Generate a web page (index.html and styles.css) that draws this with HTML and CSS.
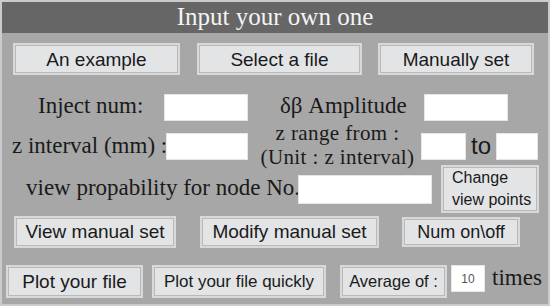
FILE: index.html
```html
<!DOCTYPE html>
<html>
<head>
<meta charset="utf-8">
<link rel="stylesheet" href="styles.css">
</head>
<body>
<div class="panel">
  <div class="title">Input your own one</div>

  <div class="row r1">
    <button class="btn b-example">An example</button>
    <button class="btn b-select">Select a file</button>
    <button class="btn b-manual">Manually set</button>
  </div>

  <div class="row r2">
    <span class="lbl l-inject">Inject num:</span>
    <input class="inp i-inject" type="text">
    <span class="lbl l-amp">δβ Amplitude</span>
    <input class="inp i-amp" type="text">
  </div>

  <div class="row r3">
    <span class="lbl l-zint">z interval (mm) :</span>
    <input class="inp i-zint" type="text">
    <span class="lbl l-range">z range from :<br>(Unit : z interval)</span>
    <input class="inp i-from" type="text">
    <span class="to">to</span>
    <input class="inp i-to" type="text">
  </div>

  <div class="row r4">
    <span class="lbl l-view">view propability for node No.</span>
    <input class="inp i-node" type="text">
    <button class="btn b-change">Change<br>view points</button>
  </div>

  <div class="row r5">
    <button class="btn b-viewset">View manual set</button>
    <button class="btn b-modify">Modify manual set</button>
    <button class="btn b-num">Num on\off</button>
  </div>

  <div class="row r6">
    <button class="btn b-plot">Plot your file</button>
    <button class="btn b-quick">Plot your file quickly</button>
    <button class="btn b-avg">Average of :</button>
    <input class="inp i-avg" type="text" value="10">
    <span class="lbl l-times">times</span>
  </div>
</div>
</body>
</html>
```

FILE: styles.css
```css
html, body {
  margin: 0;
  padding: 0;
  background: #a7a7a7;
}

.panel {
  box-sizing: border-box;
  width: 550px;
  height: 306px;
  border: 2px solid #cbcbcb;
  background: #a7a7a7;
  display: flex;
  flex-direction: column;
  overflow: hidden;
}

.title {
  height: 31px;
  flex: none;
  background: #666666;
  color: #f4f4f4;
  font-family: "Liberation Serif", serif;
  font-size: 25px;
  line-height: 29px;
  text-align: center;
}

.row {
  display: flex;
  align-items: center;
  flex: none;
}

.r1 { margin-top: 10px; height: 32px; }
.r2 { margin-top: 16px; height: 32px; }
.r3 { margin-top: 4px; height: 38px; }
.r4 { margin-top: 0; height: 48px; }
.r5 { margin-top: 2px; height: 33px; }
.r6 { margin-top: 17px; height: 33px; }

.btn {
  box-sizing: border-box;
  height: 32px;
  margin: 0;
  padding: 0;
  background: #e2e4e6;
  border: 2px solid #d9d9d9;
  box-shadow: inset 0 0 0 1px #b9b9b9;
  color: #1a1a1a;
  font-family: "Liberation Sans", Arial, sans-serif;
  font-size: 19px;
  line-height: 1;
  text-align: center;
}

.lbl {
  color: #1a1a1a;
  font-family: "Liberation Serif", serif;
  font-size: 23px;
  white-space: nowrap;
}

.inp {
  box-sizing: border-box;
  height: 27px;
  margin: 0;
  padding: 0;
  background: #ffffff;
  border: 1px solid #e6e6e6;
  outline: none;
}

/* row 1 */
.b-example { margin-left: 11px; width: 167px; }
.b-select  { margin-left: 17px; width: 165px; }
.b-manual  { margin-left: 16px; width: 156px; }

/* row 2 */
.l-inject { margin-left: 36px; width: 126px; margin-top: -3px; }
.i-inject { width: 84px; }
.l-amp    { margin-left: 32px; width: 144px; margin-top: -3px; }
.i-amp    { width: 84px; }

/* row 3 */
.l-zint  { margin-left: 10px; width: 154px; }
.i-zint  { width: 82px; }
.l-range {
  margin-left: 8px;
  width: 163px;
  text-align: center;
  font-size: 21px;
  line-height: 24.5px;
  letter-spacing: 0.4px;
  margin-top: -2px;
}
.i-from  { margin-left: 2px; width: 45px; }
.to {
  margin-left: 5px;
  width: 25px;
  color: #1a1a1a;
  font-family: "Liberation Sans", Arial, sans-serif;
  font-size: 24px;
}
.i-to    { width: 42px; }

/* row 4 */
.l-view  { margin-left: 24px; width: 272px; margin-top: -2px; }
.i-node  { width: 134px; height: 29px; }
.b-change {
  margin-left: 9px;
  width: 98px;
  height: 48px;
  padding-left: 9px;
  font-size: 16px;
  line-height: 22px;
  text-align: left;
}

/* row 5 */
.b-viewset { margin-left: 12px; width: 162px; height: 32px; font-size: 19px; }
.b-modify  { margin-left: 24px; width: 179px; height: 32px; font-size: 19px; }
.b-num     { margin-left: 23px; width: 118px; height: 30px; font-size: 18px; }

/* row 6 */
.b-plot  { margin-left: 4px; width: 137px; height: 33px; font-size: 19px; }
.b-quick { margin-left: 9px; width: 174px; height: 33px; font-size: 17px; }
.b-avg   { margin-left: 14px; width: 107px; height: 33px; font-size: 16.5px; }
.i-avg {
  margin-left: 4px;
  width: 34px;
  height: 27px;
  align-self: flex-start;
  color: #555555;
  font-family: "Liberation Sans", Arial, sans-serif;
  font-size: 12px;
  text-align: center;
}
.l-times { margin-left: 7px; font-size: 23px; margin-top: -7px; }
```
